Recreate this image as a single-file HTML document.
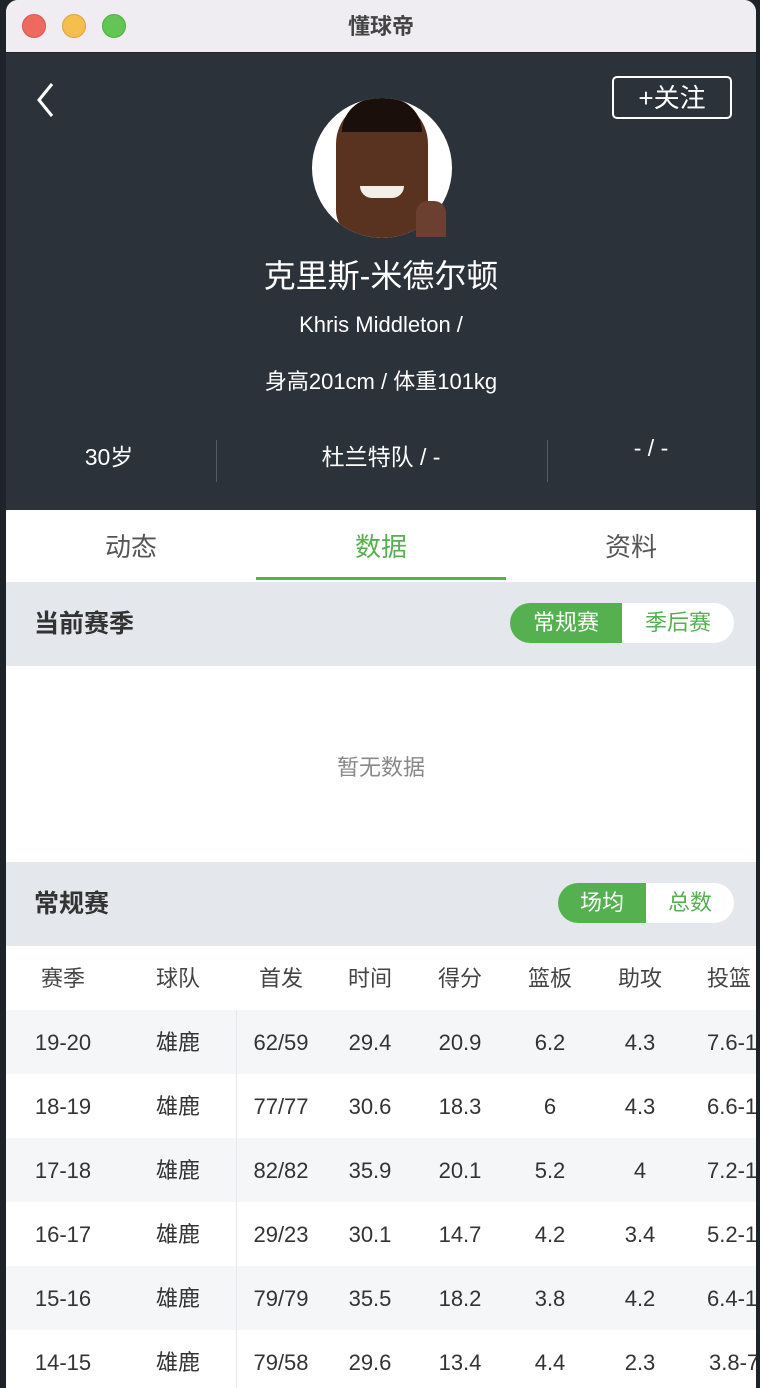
<!DOCTYPE html>
<html><head><meta charset="utf-8"><style>
*{margin:0;padding:0;box-sizing:border-box}
body{width:760px;height:1388px;background:#1e2329;font-family:"Liberation Sans","Noto Sans CJK SC",sans-serif;position:relative;overflow:hidden}
.win{position:absolute;left:6px;top:0;width:750px;height:1388px;background:#fff;border-radius:12px 12px 0 0;overflow:hidden}
.tb{position:absolute;left:0;top:0;width:750px;height:53px;background:#efecf2;border-bottom:1px solid #222}
.dot{position:absolute;top:14px;width:24px;height:24px;border-radius:50%}
.hd{position:absolute;left:0;top:53px;width:750px;height:457px;background:#2c323a}
.a{position:absolute;white-space:nowrap}
.c{text-align:center}
.w{color:#fff}
.tab{position:absolute;top:510px;height:72px;width:250px;text-align:center;font-size:26px;line-height:74px;color:#555}
.sec{position:absolute;left:0;width:750px;height:84px;background:#e4e7ec}
.sec .t{position:absolute;left:28px;top:0;line-height:84px;font-size:25px;font-weight:bold;color:#333}
.tg{position:absolute;height:40px;border-radius:20px;background:#fff;overflow:hidden;font-size:22px;line-height:40px}
.tg span{display:inline-block;text-align:center;height:40px}
.row{position:absolute;left:0;width:750px;height:64px;font-size:22px;color:#333;overflow:hidden}
.row span{position:absolute;top:0;line-height:66px;text-align:center;width:90px;margin-left:-45px;white-space:nowrap}
.row span.l{left:701px;margin-left:0;text-align:left;width:120px}
.g{background:#f5f6f8}
</style></head><body>
<div class="win">
<div class="tb">
<div class="dot" style="left:16px;background:#ee6a5f;border:1px solid #d9564c"></div>
<div class="dot" style="left:56px;background:#f5be4f;border:1px solid #dca33a"></div>
<div class="dot" style="left:96px;background:#62c554;border:1px solid #4fae43"></div>
<div class="a c" style="left:0;width:750px;top:0;line-height:53px;font-size:22px;font-weight:bold;color:#444">懂球帝</div>
</div>
<div class="hd">
<svg class="a" style="left:28px;top:28px" width="24" height="38"><path d="M18 3 L5 19 L18 35" stroke="#fff" stroke-width="3" fill="none"/></svg>
<div class="a w" style="left:606px;top:23px;width:120px;height:43px;border:2px solid #fff;border-radius:5px;font-size:26px;line-height:40px;text-align:center">+关注</div>
<div class="a" style="left:306px;top:45px;width:140px;height:140px;border-radius:50%;background:#fff;overflow:hidden">
<div style="position:absolute;left:24px;top:2px;width:92px;height:140px;border-radius:44px 44px 30px 30px;background:#5a3220"></div>
<div style="position:absolute;left:30px;top:0;width:80px;height:34px;border-radius:40px 40px 0 0;background:#1a0f0a"></div>
<div style="position:absolute;left:48px;top:88px;width:44px;height:12px;border-radius:0 0 20px 20px;background:#f3eee8"></div>
</div>
<div class="a" style="left:410px;top:148px;width:30px;height:36px;background:#6b4030;border-radius:12px 12px 0 0"></div>
<div class="a c w" style="left:0;width:750px;top:198px;font-size:32px">克里斯-米德尔顿</div>
<div class="a c w" style="left:0;width:750px;top:259px;font-size:22px">Khris Middleton /</div>
<div class="a c w" style="left:0;width:750px;top:311px;font-size:22px">身高201cm / 体重101kg</div>
<div class="a c w" style="left:28px;width:150px;top:385px;font-size:23px">30岁</div>
<div class="a" style="left:210px;top:387px;width:1px;height:42px;background:#555c66"></div>
<div class="a c w" style="left:250px;width:250px;top:385px;font-size:23px">杜兰特队 / -</div>
<div class="a" style="left:541px;top:387px;width:1px;height:42px;background:#555c66"></div>
<div class="a c w" style="left:570px;width:150px;top:382px;font-size:23px">- / -</div>
</div>
<div class="tab" style="left:0">动态</div>
<div class="tab" style="left:250px;color:#55b04f">数据</div>
<div class="tab" style="left:500px">资料</div>
<div class="a" style="left:250px;top:577px;width:250px;height:3px;background:#55b04f"></div>
<div class="sec" style="top:582px"><div class="t">当前赛季</div>
<div class="tg" style="left:504px;top:21px;width:224px"><span style="width:112px;background:#55b04f;color:#fff">常规赛</span><span style="width:112px;color:#55b04f">季后赛</span></div></div>
<div class="a c" style="left:0;width:750px;top:750px;font-size:22px;color:#888">暂无数据</div>
<div class="sec" style="top:862px"><div class="t">常规赛</div>
<div class="tg" style="left:552px;top:21px;width:176px"><span style="width:88px;background:#55b04f;color:#fff">场均</span><span style="width:88px;color:#55b04f">总数</span></div></div>
<div class="row" style="top:946px;color:#444"><span style="left:57px">赛季</span><span style="left:172px">球队</span><span style="left:275px">首发</span><span style="left:364px">时间</span><span style="left:454px">得分</span><span style="left:544px">篮板</span><span style="left:634px">助攻</span><span class="l">投篮</span></div>
<div class="row g" style="top:1010px"><span style="left:57px">19-20</span><span style="left:172px">雄鹿</span><span style="left:275px">62/59</span><span style="left:364px">29.4</span><span style="left:454px">20.9</span><span style="left:544px">6.2</span><span style="left:634px">4.3</span><span class="l">7.6-15</span></div>
<div class="row" style="top:1074px"><span style="left:57px">18-19</span><span style="left:172px">雄鹿</span><span style="left:275px">77/77</span><span style="left:364px">30.6</span><span style="left:454px">18.3</span><span style="left:544px">6</span><span style="left:634px">4.3</span><span class="l">6.6-14</span></div>
<div class="row g" style="top:1138px"><span style="left:57px">17-18</span><span style="left:172px">雄鹿</span><span style="left:275px">82/82</span><span style="left:364px">35.9</span><span style="left:454px">20.1</span><span style="left:544px">5.2</span><span style="left:634px">4</span><span class="l">7.2-15</span></div>
<div class="row" style="top:1202px"><span style="left:57px">16-17</span><span style="left:172px">雄鹿</span><span style="left:275px">29/23</span><span style="left:364px">30.1</span><span style="left:454px">14.7</span><span style="left:544px">4.2</span><span style="left:634px">3.4</span><span class="l">5.2-11</span></div>
<div class="row g" style="top:1266px"><span style="left:57px">15-16</span><span style="left:172px">雄鹿</span><span style="left:275px">79/79</span><span style="left:364px">35.5</span><span style="left:454px">18.2</span><span style="left:544px">3.8</span><span style="left:634px">4.2</span><span class="l">6.4-14</span></div>
<div class="row" style="top:1330px;height:58px"><span style="left:57px">14-15</span><span style="left:172px">雄鹿</span><span style="left:275px">79/58</span><span style="left:364px">29.6</span><span style="left:454px">13.4</span><span style="left:544px">4.4</span><span style="left:634px">2.3</span><span class="l" style="left:703px">3.8-7.</span></div>
<div class="a" style="left:230px;top:1010px;width:1px;height:378px;background:#e6e8ec"></div>
</div>
</body></html>
